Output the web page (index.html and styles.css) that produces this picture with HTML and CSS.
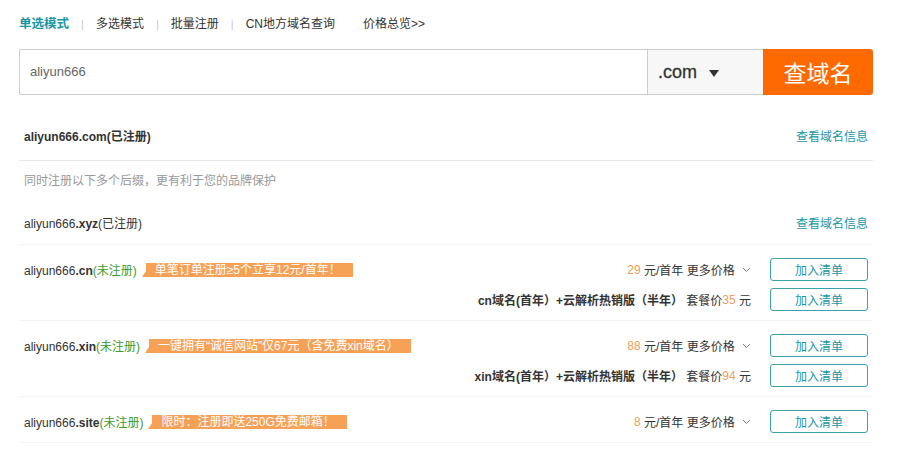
FILE: index.html
```html
<!DOCTYPE html>
<html lang="zh-CN">
<head>
<meta charset="utf-8">
<title>域名查询</title>
<link rel="stylesheet" href="styles.css">
</head>
<body>
<div class="page">
  <nav class="tabs">
    <a class="tab active">单选模式</a><span class="sep">|</span>
    <a class="tab">多选模式</a><span class="sep">|</span>
    <a class="tab">批量注册</a><span class="sep">|</span>
    <a class="tab">CN地方域名查询</a>
    <a class="tab overview">价格总览&gt;&gt;</a>
  </nav>

  <div class="search">
    <div class="input">aliyun666</div>
    <div class="suffix">.com <svg class="caret" width="10" height="7" viewBox="0 0 10 7"><path d="M0 0h10L5 7z" fill="#333"/></svg></div>
    <button class="go">查域名</button>
  </div>

  <div class="results">
    <div class="row first">
      <span class="name"><b>aliyun666.com</b>(已注册)</span>
      <a class="info">查看域名信息</a>
    </div>
    <div class="hint">同时注册以下多个后缀，更有利于您的品牌保护</div>
    <div class="row taken">
      <span class="name">aliyun666<b>.xyz</b>(已注册)</span>
      <a class="info">查看域名信息</a>
    </div>

    <div class="row avail">
      <div class="line">
        <span class="name">aliyun666<b>.cn</b><span class="free">(未注册)</span></span>
        <span class="badge">单笔订单注册≥5个立享12元/首年！</span>
        <span class="price"><em>29</em> 元/首年 更多价格 <svg class="chev" width="9" height="6" viewBox="0 0 9 6"><path d="M1 1l3.5 3.5L8 1" fill="none" stroke="#888" stroke-width="1"/></svg></span>
        <button class="add">加入清单</button>
      </div>
      <div class="line">
        <span class="price"><b>cn域名(首年）+云解析热销版（半年）</b> 套餐价<em>35</em> 元</span>
        <button class="add">加入清单</button>
      </div>
    </div>

    <div class="row avail">
      <div class="line">
        <span class="name">aliyun666<b>.xin</b><span class="free">(未注册)</span></span>
        <span class="badge">一键拥有“诚信网站”仅67元（含免费xin域名）</span>
        <span class="price"><em>88</em> 元/首年 更多价格 <svg class="chev" width="9" height="6" viewBox="0 0 9 6"><path d="M1 1l3.5 3.5L8 1" fill="none" stroke="#888" stroke-width="1"/></svg></span>
        <button class="add">加入清单</button>
      </div>
      <div class="line">
        <span class="price"><b>xin域名(首年）+云解析热销版（半年）</b> 套餐价<em>94</em> 元</span>
        <button class="add">加入清单</button>
      </div>
    </div>

    <div class="row avail">
      <div class="line">
        <span class="name">aliyun666<b>.site</b><span class="free">(未注册)</span></span>
        <span class="badge">限时：注册即送250G免费邮箱！</span>
        <span class="price"><em>8</em> 元/首年 更多价格 <svg class="chev" width="9" height="6" viewBox="0 0 9 6"><path d="M1 1l3.5 3.5L8 1" fill="none" stroke="#888" stroke-width="1"/></svg></span>
        <button class="add">加入清单</button>
      </div>
    </div>
  </div>
</div>
</body>
</html>
```

FILE: styles.css
```css
* { box-sizing: border-box; }
body {
  margin: 0;
  background: #fff;
  font-family: "Liberation Sans", "Noto Sans CJK SC", sans-serif;
  font-size: 12px;
  color: #333;
}
.page {
  width: 854px;
  margin-left: 19px;
}
.tabs {
  display: flex;
  align-items: center;
  height: 49px;
  line-height: 16px;
  padding-bottom: 1px;
}
.tab {
  color: #333;
  font-size: 12px;
  cursor: pointer;
}
.tab.active {
  color: #1a97a6;
  font-weight: bold;
  font-size: 12.5px;
}
.sep {
  color: #c8c8c8;
  margin: 0 12px;
  font-size: 11px;
}
.tab.overview {
  margin-left: 28px;
}

.search {
  display: flex;
  height: 46px;
}
.input {
  flex: 1;
  border: 1px solid #ccc;
  border-right: none;
  border-radius: 2px 0 0 2px;
  padding-left: 10px;
  font-size: 13px;
  color: #666;
  line-height: 44px;
}
.suffix {
  width: 116px;
  border: 1px solid #ccc;
  border-right: none;
  background: #f7f7f7;
  display: flex;
  align-items: center;
  padding-left: 10px;
  font-size: 18px;
  color: #333;
  -webkit-text-stroke: 0.3px #333;
}
.caret {
  margin-left: 12px;
  margin-top: 2px;
}
.go {
  width: 110px;
  border: none;
  background: #ff6a00;
  color: #fff;
  font-family: "Noto Sans CJK SC", sans-serif;
  font-size: 23px;
  border-radius: 0 3px 3px 0;
  padding: 0;
  cursor: pointer;
}

.results {
  margin-top: 20px;
}
.row {
  display: flex;
  align-items: center;
  justify-content: space-between;
  padding: 0 5px;
}
.row.first {
  height: 46px;
  line-height: 45px;
  border-bottom: 1px solid #e8e8e8;
}
.row.first .name {
  font-weight: bold;
}
.hint {
  height: 40px;
  line-height: 40px;
  padding-left: 5px;
  color: #999;
}
.row.taken {
  height: 44px;
  border-bottom: 1px solid #f3f3f3;
}
.name b { font-weight: bold; }
.info {
  color: #1a97a6;
  cursor: pointer;
}
.row.avail {
  flex-direction: column;
  align-items: stretch;
  gap: 7px;
  padding: 13px 5px 9px;
  border-bottom: 1px solid #f3f3f3;
}
.line {
  display: flex;
  align-items: center;
  height: 23px;
}
.free {
  color: #3d9a2c;
}
.badge {
  position: relative;
  margin-left: 9px;
  background: #f7a157;
  color: #fff;
  font-size: 12px;
  height: 14px;
  line-height: 14px;
  padding: 0 12px 0 9px;
  white-space: nowrap;
}
.badge::before {
  content: "";
  position: absolute;
  left: -4px;
  bottom: 0;
  border-style: solid;
  border-width: 0 0 6px 4px;
  border-color: transparent transparent #f7a157 transparent;
}
.price {
  margin-left: auto;
  margin-right: 19px;
  display: flex;
  align-items: center;
  white-space: pre;
}
.price em {
  font-style: normal;
  color: #eea05a;
}
.price b {
  font-weight: bold;
}
.chev {
  margin-left: 4px;
}
.add {
  width: 98px;
  height: 23px;
  border: 1px solid #3ba2ad;
  border-radius: 3px;
  background: #fff;
  color: #1a97a6;
  font-family: "Liberation Sans", "Noto Sans CJK SC", sans-serif;
  font-size: 12px;
  padding: 0;
  cursor: pointer;
}
```
